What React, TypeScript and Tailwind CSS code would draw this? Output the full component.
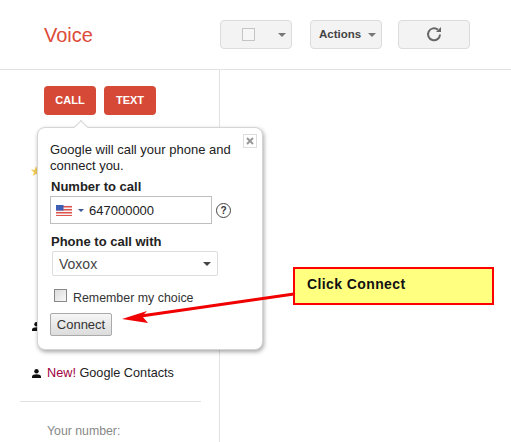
function Caret({ className = "border-t-[#777]" }: { className?: string }) {
  return <span className={`h-0 w-0 border-x-4 border-t-4 border-x-transparent ${className}`} />;
}

function Person({ className = "" }: { className?: string }) {
  return (
    <svg className={className} width="9" height="9" viewBox="0 0 9 9" fill="#111">
      <circle cx="4.5" cy="2.2" r="2.2" />
      <path d="M0 9V7.4C0 6 2.4 5.2 4.5 5.2S9 6 9 7.4V9Z" />
    </svg>
  );
}

function ToolButton({ className, children }: { className: string; children: React.ReactNode }) {
  return (
    <div className={`flex h-[29px] items-center rounded-sm border border-[#dcdcdc] bg-[#f3f3f3] ${className}`}>
      {children}
    </div>
  );
}

function Popover() {
  return (
    <div className="absolute left-[37px] top-[127px] h-[223px] w-[226px] rounded-[8px] border border-[#d5d5d5] bg-white pl-3 pt-[14px] text-[13px] leading-4 text-[#222] shadow-[1px_2px_4px_rgba(0,0,0,0.35)]">
      <div className="absolute -top-[6px] left-[38px] h-[10px] w-[10px] rotate-45 border-l border-t border-[#d5d5d5] bg-white" />
      <div className="absolute right-[5px] top-[6px] flex h-[14px] w-[14px] items-center justify-center border border-[#ddd]">
        <svg width="8" height="8" viewBox="0 0 8 8">
          <path d="M1 1 7 7M7 1 1 7" stroke="#999" strokeWidth="2" />
        </svg>
      </div>
      <p className="w-[190px]">Google will call your phone and connect you.</p>
      <p className="ml-px mt-[5px] font-bold">Number to call</p>
      <div className="mt-px flex items-center">
        <div className="flex h-[28px] w-[162px] items-center border border-[#bfbfbf] pl-[5px]">
          <svg width="16" height="11" viewBox="0 0 16 11">
            <rect width="16" height="11" fill="#f4f4f4" />
            <path d="M0 1h16v1.5H0zM0 4h16v1.5H0zM0 7h16v1.5H0zM0 10h16v1H0z" fill="#e0524a" />
            <rect width="7.5" height="5.5" fill="#3f5fb5" />
          </svg>
          <span className="ml-[6px] h-0 w-0 border-x-[3px] border-t-[3px] border-x-transparent border-t-[#3b5998]" />
          <span className="ml-[5px] mt-[2px] text-[13px] text-[#222]">647000000</span>
        </div>
        <div className="ml-[4px] mt-px flex h-[15px] w-[15px] items-center justify-center rounded-full border-[1.5px] border-[#444] text-[10px] font-bold leading-none text-[#333]">
          ?
        </div>
      </div>
      <p className="ml-px mt-[10px] font-bold">Phone to call with</p>
      <div className="ml-[2px] mt-px flex h-[25px] w-[166px] items-center justify-between rounded-[2px] border border-[#dcdcdc] px-[6px]">
        <span className="text-[14px] text-[#444]">Voxox</span>
        <Caret className="border-t-[#444]" />
      </div>
      <div className="ml-[4px] mt-[13px] flex h-[13px] items-start gap-[6px]">
        <span className="h-[13px] w-[13px] border border-[#888] bg-gradient-to-br from-[#dcdcdc] to-[#f8f8f8]" />
        <span className="mt-px text-[12.4px] leading-4 text-[#333]">Remember my choice</span>
      </div>
      <div className="mt-[11px] flex h-[23px] w-[62px] items-center justify-center rounded-[2px] border border-[#aaa] bg-gradient-to-b from-[#f6f6f6] to-[#dcdcdc] text-[13px] text-[#333]">
        Connect
      </div>
    </div>
  );
}

export default function App() {
  return (
    <div className="relative flex h-[442px] w-[511px] flex-col overflow-hidden bg-white font-['Liberation_Sans',Arial,sans-serif]">
      <header className="flex h-[70px] shrink-0 items-start border-b border-[#e2e2e2] pt-5">
        <span className="ml-[44px] w-[176px] pt-[1px] text-[20px] leading-[29px] text-[#dd4b39]">Voice</span>
        <ToolButton className="w-[72px] pl-[21px]">
          <span className="h-[13px] w-[13px] border border-[#c4c4c4] bg-[#f6f6f6]" />
          <span className="ml-[23px] flex"><Caret /></span>
        </ToolButton>
        <ToolButton className="ml-[18px] w-[72px] pl-[8px]">
          <span className="text-[11.5px] font-bold text-[#444]">Actions</span>
          <span className="ml-[7px] flex"><Caret /></span>
        </ToolButton>
        <ToolButton className="ml-4 w-[72px] justify-center">
          <svg className="-mt-px" width="16" height="16" viewBox="0 0 16 16" fill="none">
            <path d="M14 8.5a6 6 0 1 1-2-4.7" stroke="#666" strokeWidth="2" />
            <path d="M10 6h5V1Z" fill="#666" />
          </svg>
        </ToolButton>
      </header>
      <div className="flex min-h-0 flex-1">
        <aside className="h-full w-[220px] shrink-0 border-r border-[#e2e2e2] pt-4">
          <div className="ml-[44px] flex gap-2">
            <div className="flex h-[29px] w-[52px] items-center justify-center rounded-sm bg-[#d74937] text-[11px] font-bold text-white">CALL</div>
            <div className="flex h-[29px] w-[52px] items-center justify-center rounded-sm bg-[#d74937] text-[11px] font-bold text-white">TEXT</div>
          </div>
          <div className="ml-[30px] mt-[50px] h-3 w-3 text-[14px] leading-3 text-[#f1ca5a]">★</div>
          <Person className="ml-[32px] mt-[145px]" />
          <div className="ml-[32px] mt-[34px] flex items-center gap-[6px] text-[12.7px] leading-4 text-[#222]">
            <Person />
            <span><span className="text-[#a00040]">New!</span> Google Contacts</span>
          </div>
          <div className="ml-5 mt-[20px] h-px w-[181px] bg-[#e2e2e2]" />
          <p className="ml-[47px] mt-[21px] text-[12.3px] leading-4 text-[#888]">Your number:</p>
        </aside>
        <main className="flex-1" />
      </div>
      <Popover />
      <svg className="absolute left-[120px] top-[290px]" width="176" height="40" viewBox="0 0 176 40">
        <path d="M174 4 21 26" stroke="#f00000" strokeWidth="3" />
        <path d="M2 29 27 21 22 26 28 33Z" fill="#f00000" />
      </svg>
      <div className="absolute left-[293px] top-[267px] flex h-[38px] w-[201px] items-start border-2 border-[#ff0000] bg-[#ffff80] pl-[12px] pt-[7px] text-[14px] font-bold leading-4 tracking-[0.4px] text-[#111]">
        Click Connect
      </div>
    </div>
  );
}
